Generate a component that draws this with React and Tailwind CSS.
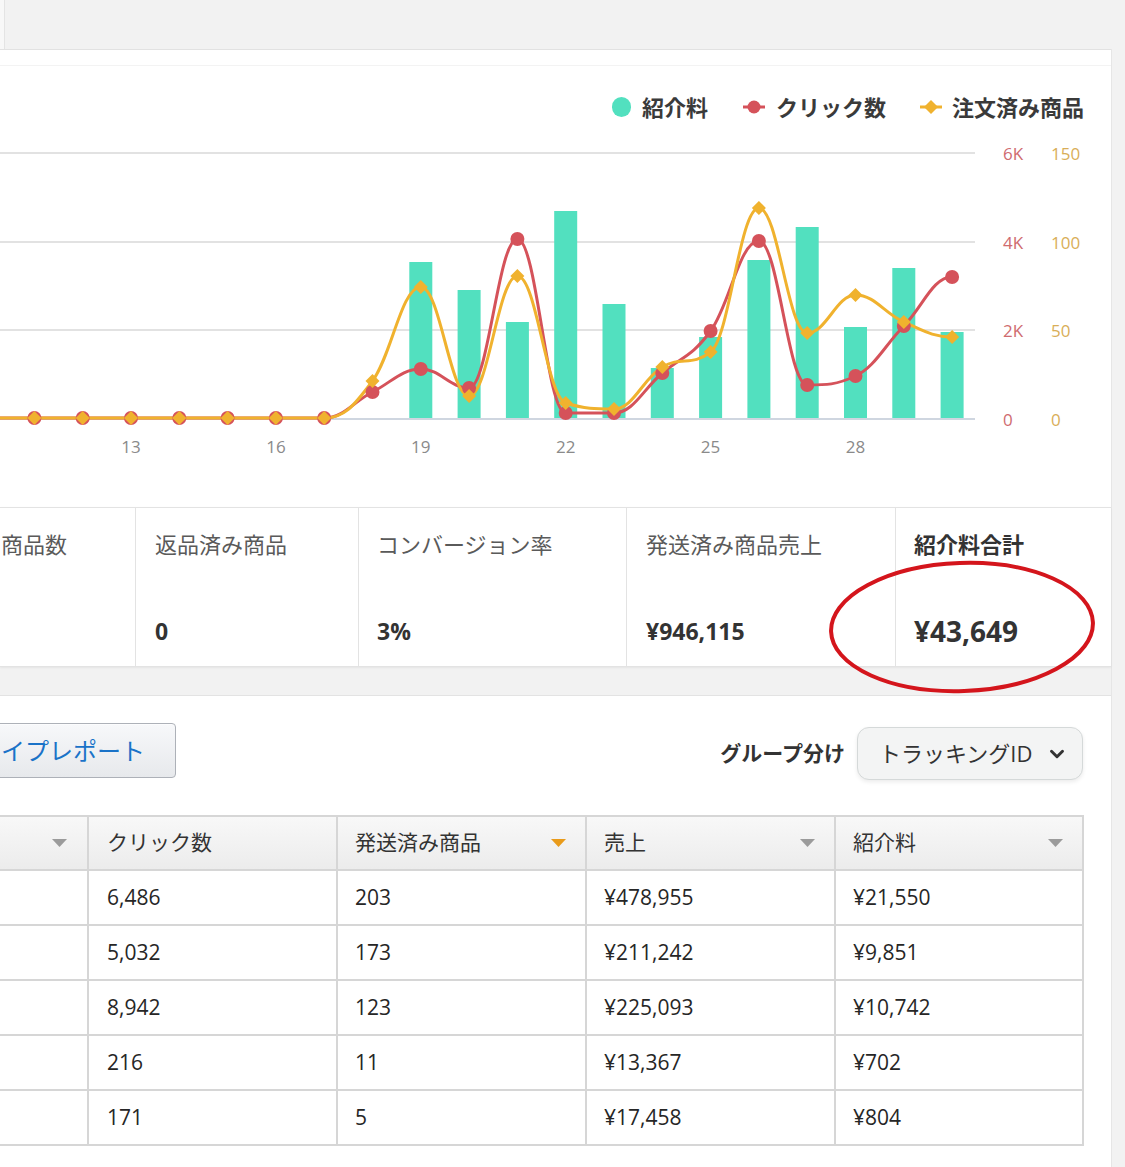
import { ChevronDown } from "lucide-react";

// chart geometry, in page pixels
const X0 = 131;
const STEP = 48.3;
const TOP = 138;
const BASE = 418;
const xOf = (d) => X0 + (d - 13) * STEP;

const bars = { 19: 262, 20: 290, 21: 322, 22: 211, 23: 304, 24: 368, 25: 337, 26: 260, 27: 227, 28: 327, 29: 268, 30: 332 };

const clicks = { 18: 392, 19: 369, 20: 388, 21: 239, 22: 413, 23: 413, 24: 373, 25: 331, 26: 241, 27: 385, 28: 376, 29: 326, 30: 277 };
const orders = { 18: 381, 19: 287, 20: 396, 21: 276, 22: 403, 23: 409, 24: 367, 25: 352, 26: 208, 27: 333, 28: 295, 29: 322, 30: 337 };

const days = Array.from({ length: 21 }, (_, i) => i + 10);
const toPts = (obj) => days.map((d) => [xOf(d), obj[d] ?? BASE]);

// spline without false extremes (control points kept between neighbours)
function controls(pts, i) {
  const s = 1.5;
  const den = s + 1;
  const [x, y] = pts[i];
  const [lx, ly] = pts[i - 1] || pts[i];
  const [nx, ny] = pts[i + 1] || pts[i];
  const lcx = (s * x + lx) / den;
  let lcy = (s * y + ly) / den;
  const rcx = (s * x + nx) / den;
  let rcy = (s * y + ny) / den;
  if (rcx !== lcx) {
    const corr = ((rcy - lcy) * (rcx - x)) / (rcx - lcx) + y - rcy;
    lcy += corr;
    rcy += corr;
  }
  if (lcy > ly && lcy > y) {
    lcy = Math.max(ly, y);
    rcy = 2 * y - lcy;
  } else if (lcy < ly && lcy < y) {
    lcy = Math.min(ly, y);
    rcy = 2 * y - lcy;
  }
  if (rcy > ny && rcy > y) {
    rcy = Math.max(ny, y);
    lcy = 2 * y - rcy;
  } else if (rcy < ny && rcy < y) {
    rcy = Math.min(ny, y);
    lcy = 2 * y - rcy;
  }
  return { l: [lcx, lcy], r: [rcx, rcy] };
}

function smooth(pts) {
  const c = pts.map((_, i) => controls(pts, i));
  let d = `M${pts[0][0]},${pts[0][1]}`;
  for (let i = 1; i < pts.length; i++) {
    const a = c[i - 1].r;
    const b = c[i].l;
    d += ` C${a[0]},${a[1]} ${b[0]},${b[1]} ${pts[i][0]},${pts[i][1]}`;
  }
  return d;
}

const RED = "#d5525a";
const GOLD = "#f0b22e";
const TEAL = "#52e0bf";

function Chart() {
  const red = toPts(clicks);
  const gold = toPts(orders);
  const font = "'Open Sans', 'Noto Sans CJK JP', sans-serif";
  return (
    <svg width="1112" height="369" viewBox={`0 ${TOP} 1112 369`} className="block">
      {[153, 242, 330].map((y) => (
        <line key={y} x1="0" x2="975" y1={y} y2={y} stroke="#e2e2e2" strokeWidth="2" />
      ))}
      <line x1="0" x2="975" y1={BASE + 1} y2={BASE + 1} stroke="#cfd6e0" strokeWidth="2" />
      {Object.entries(bars).map(([d, y]) => (
        <rect key={d} x={xOf(+d) - 11.5} y={y} width="23" height={BASE - y} fill={TEAL} />
      ))}
      <path d={smooth(red)} fill="none" stroke={RED} strokeWidth="3" />
      <path d={smooth(gold)} fill="none" stroke={GOLD} strokeWidth="3" />
      {red.map(([x, y], i) => (
        <circle key={i} cx={x} cy={y} r="7" fill={RED} />
      ))}
      {gold.map(([x, y], i) => (
        <polygon key={i} points={`${x},${y - 7} ${x + 7},${y} ${x},${y + 7} ${x - 7},${y}`} fill={GOLD} />
      ))}
      {[13, 16, 19, 22, 25, 28].map((d) => (
        <text key={d} x={xOf(d)} y="453" textAnchor="middle" fontSize="17" fill="#8a8a8a" fontFamily={font}>
          {d}
        </text>
      ))}
      {[
        [160, "6K", "150"],
        [249, "4K", "100"],
        [337, "2K", "50"],
        [426, "0", "0"],
      ].map(([y, a, b]) => (
        <g key={a} fontSize="17" fontFamily={font}>
          <text x="1003" y={y} fill="#cf6b6f">{a}</text>
          <text x="1051" y={y} fill="#d9ae58">{b}</text>
        </g>
      ))}
    </svg>
  );
}

const metrics = [
  { w: "w-[135px]", pad: "pl-[1px]", label: "商品数", value: "" },
  { w: "w-[223px]", pad: "pl-[19px]", label: "返品済み商品", value: "0" },
  { w: "w-[268px]", pad: "pl-[18px]", label: "コンバージョン率", value: "3%" },
  { w: "w-[269px]", pad: "pl-[19px]", label: "発送済み商品売上", value: "¥946,115" },
];

const rows = [
  ["6,486", "203", "¥478,955", "¥21,550"],
  ["5,032", "173", "¥211,242", "¥9,851"],
  ["8,942", "123", "¥225,093", "¥10,742"],
  ["216", "11", "¥13,367", "¥702"],
  ["171", "5", "¥17,458", "¥804"],
];

function Caret({ color = "#9b9b9b" }) {
  return (
    <svg width="15" height="8" viewBox="0 0 15 8">
      <polygon points="0,0 15,0 7.5,8" fill={color} />
    </svg>
  );
}

export default function App() {
  return (
    <div className="relative w-[1125px] h-[1167px] overflow-hidden bg-[#f2f2f2] font-['Open_Sans','Noto_Sans_CJK_JP',sans-serif] text-[#333]">
      {/* top strip */}
      <div className="h-[49px] flex">
        <div className="w-[5px] h-full bg-[#f8f8f8] border-r border-[#e4e4e4]" />
      </div>

      <div className="w-[1112px] border-r border-[#e6e6e6]">
        {/* chart card */}
        <div className="bg-white border-t border-[#e2e2e2]">
          <div className="h-[16px] border-b border-[#f3f3f3]" />
          <div className="h-[72px] pt-[10px] flex items-center justify-end pr-[27px] text-[22px] font-semibold text-[#3a3a3a]">
            <span className="w-[19px] h-[20px] rounded-full bg-[#52e0bf]" />
            <span className="ml-[11px]">紹介料</span>
            <svg width="22" height="16" viewBox="0 0 22 16" className="ml-[35px]">
              <line x1="0" x2="22" y1="8" y2="8" stroke={RED} strokeWidth="3" />
              <circle cx="11" cy="8" r="6.5" fill={RED} />
            </svg>
            <span className="ml-[11px]">クリック数</span>
            <svg width="22" height="16" viewBox="0 0 22 16" className="ml-[34px]">
              <line x1="0" x2="22" y1="8" y2="8" stroke={GOLD} strokeWidth="3" />
              <polygon points="11,1 18,8 11,15 4,8" fill={GOLD} />
            </svg>
            <span className="ml-[10px]">注文済み商品</span>
          </div>
          <Chart />
        </div>

        {/* summary metrics */}
        <div className="flex h-[160px] bg-white border-y border-[#e3e3e3] shadow-[0_1px_2px_rgba(0,0,0,0.06)]">
          {metrics.map((m, i) => (
            <div key={m.label} className={`${m.w} ${m.pad} ${i > 0 ? "border-l border-[#e3e3e3]" : ""} pt-[21px] flex flex-col`}>
              <span className="h-[30px] leading-[30px] text-[22px] text-[#5a5a5a]">{m.label}</span>
              <span className="mt-[57px] h-[30px] leading-[30px] text-[23px] font-bold text-[#333]">{m.value}</span>
            </div>
          ))}
          <div className="flex-1 pl-[18px] pt-[21px] flex flex-col border-l border-[#e3e3e3]">
            <span className="h-[30px] leading-[30px] text-[22px] font-bold text-[#333]">紹介料合計</span>
            <span className="mt-[55px] h-[34px] leading-[34px] text-[28px] font-bold text-[#333]">¥43,649</span>
          </div>
        </div>

        <div className="h-[28px]" />

        {/* report card */}
        <div className="bg-white border-t border-[#e3e3e3] h-[500px] pt-[27px]">
          <div className="flex items-start justify-between pr-[28px]">
            <button className="-ml-[30px] w-[206px] h-[55px] flex items-center justify-end pr-[30px] rounded-[4px] border border-[#adb1b8] bg-gradient-to-b from-[#f7f8fa] to-[#e7e9ec] text-[24px] text-[#1a73c8] shadow-[inset_0_1px_0_rgba(255,255,255,0.6)]">
              イプレポート
            </button>
            <div className="mt-[4px] flex items-center">
              <span className="text-[21px] font-bold text-[#333] mr-[12px]">グループ分け</span>
              <div className="w-[226px] h-[53px] flex items-center justify-between pl-[21px] pr-[14px] rounded-[12px] border border-[#d5d9d9] bg-[#f3f4f4] shadow-[0_2px_4px_rgba(0,0,0,0.08)]">
                <span className="text-[22px] text-[#333]">トラッキングID</span>
                <ChevronDown size={22} strokeWidth={3.2} color="#333" />
              </div>
            </div>
          </div>

          <div className="mt-[35px] w-[1084px] border-t-2 border-r-2 border-[#d6d6d6]">
            <div className="flex h-[54px] border-b-2 border-[#d6d6d6] bg-gradient-to-b from-[#f8f8f8] to-[#ececec] text-[21px] text-[#333]">
              <div className="w-[89px] border-r-2 border-[#d6d6d6] flex items-center justify-end pr-[20px]">
                <Caret />
              </div>
              <div className="w-[249px] border-r-2 border-[#d6d6d6] flex items-center pl-[18px]">クリック数</div>
              <div className="w-[249px] border-r-2 border-[#d6d6d6] flex items-center justify-between pl-[17px] pr-[19px]">
                <span>発送済み商品</span>
                <Caret color="#e99b1a" />
              </div>
              <div className="w-[249px] border-r-2 border-[#d6d6d6] flex items-center justify-between pl-[17px] pr-[19px]">
                <span>売上</span>
                <Caret />
              </div>
              <div className="flex-1 flex items-center justify-between pl-[17px] pr-[19px]">
                <span>紹介料</span>
                <Caret />
              </div>
            </div>
            {rows.map((r, i) => (
              <div key={i} className="flex h-[55px] border-b-2 border-[#d6d6d6] bg-white text-[21px] text-[#262626]">
                <div className="w-[89px] border-r-2 border-[#d6d6d6]" />
                <div className="w-[249px] border-r-2 border-[#d6d6d6] flex items-center pl-[18px]">{r[0]}</div>
                <div className="w-[249px] border-r-2 border-[#d6d6d6] flex items-center pl-[17px]">{r[1]}</div>
                <div className="w-[249px] border-r-2 border-[#d6d6d6] flex items-center pl-[17px]">{r[2]}</div>
                <div className="flex-1 flex items-center pl-[17px]">{r[3]}</div>
              </div>
            ))}
          </div>
        </div>
      </div>

      {/* hand-drawn highlight over the total */}
      <svg width="280" height="144" viewBox="0 0 280 144" className="absolute left-[822px] top-[555px] pointer-events-none">
        <ellipse cx="140" cy="72" rx="131" ry="64" fill="none" stroke="#d4151c" strokeWidth="4" transform="rotate(-2 140 72)" />
      </svg>
    </div>
  );
}
